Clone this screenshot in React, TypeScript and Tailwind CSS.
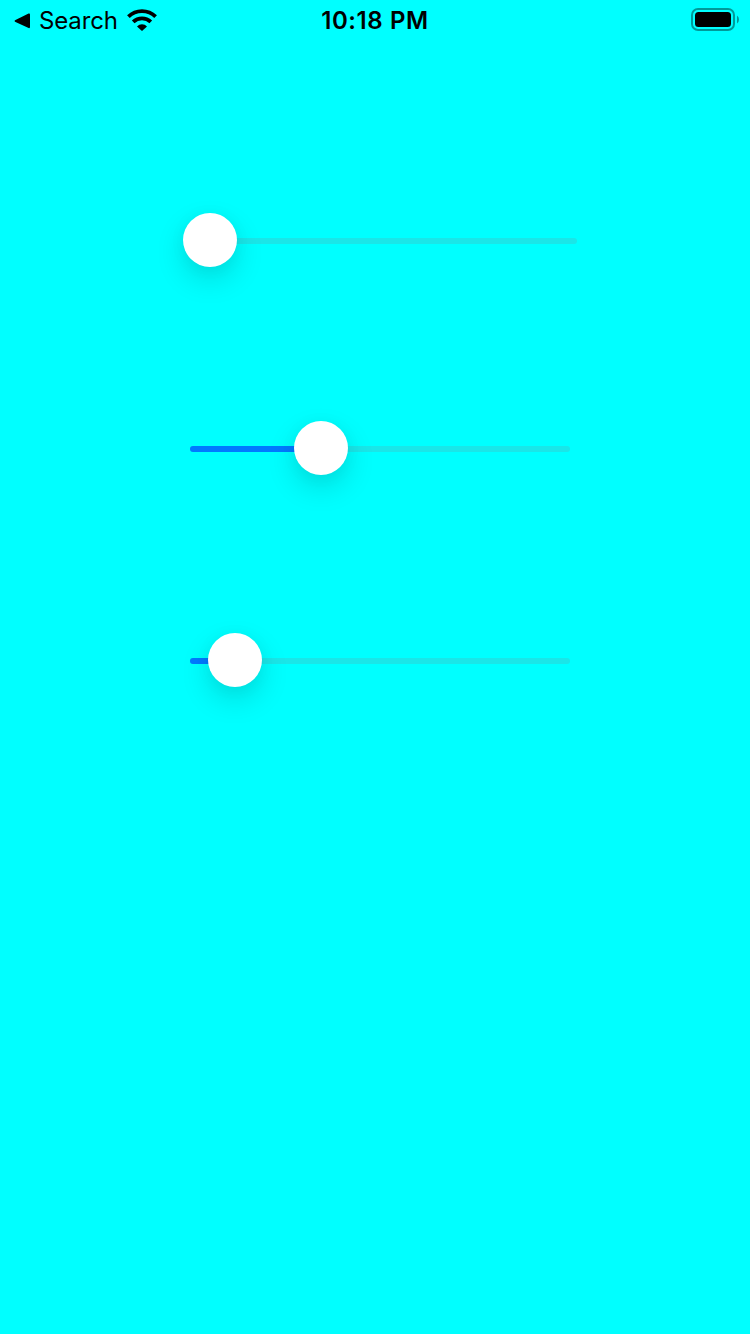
type SliderProps = { label: string; value: number; className: string };

const KNOB = 54;

function Slider({ label, value, className }: SliderProps) {
  return (
    <div
      role="slider"
      aria-label={label}
      aria-valuemin={0}
      aria-valuemax={394}
      aria-valuenow={value}
      className={`relative flex h-[54px] items-center ${className}`}
    >
      <div className="mt-[2px] h-[6px] w-full overflow-hidden rounded-full bg-[#1ae6e8]">
        <div className="h-full bg-[#007aff]" style={{ width: value > 0 ? value + KNOB / 2 : 0 }} />
      </div>
      <div
        className="absolute top-0 size-[54px] rounded-full bg-white shadow-[0_12px_30px_rgba(0,0,0,0.14),0_2px_18px_rgba(0,0,0,0.04)]"
        style={{ left: value }}
      />
    </div>
  );
}

function StatusBar() {
  return (
    <header className="grid h-10 grid-cols-3 items-center font-['Inter','Liberation_Sans',sans-serif] text-black">
      <div className="flex h-10 items-center pl-[14px]">
        <svg width="17" height="16" viewBox="0 0 17 16" className="mt-[2px] shrink-0" aria-hidden="true">
          <path d="M1 7.2 14.6.6Q16 .1 16 1.6V14Q16 15.6 14.6 15L1 8.8Q0 8 1 7.2Z" />
        </svg>
        <span className="mt-[2px] ml-2 w-[79px] whitespace-nowrap text-[24px] leading-10 tracking-[-0.15px]">Search</span>
        <svg width="30" height="22" viewBox="0 0 30 22" className="ml-[8.5px] shrink-0" aria-hidden="true">
          <g fill="none" stroke="#000" strokeWidth="3.8">
            <path d="M1.4 7.6A19.4 19.4 0 0 1 28.6 7.6" />
            <path d="M6.2 12.9A12.6 12.6 0 0 1 23.8 12.9" />
          </g>
          <path d="M10 17.4A7.1 7.1 0 0 1 20 17.4L15.6 21.6Q15 22.1 14.4 21.6Z" />
        </svg>
      </div>
      <div className="pt-[2px] text-center text-[24px] leading-[38px] font-semibold tracking-[0.6px] whitespace-nowrap">10:18 PM</div>
      <div className="flex justify-end pr-[10px]">
        <svg width="49" height="24" viewBox="0 0 49 24" aria-hidden="true">
          <rect x="1" y="1" width="42" height="21" rx="6" fill="none" stroke="#000" strokeOpacity=".4" strokeWidth="2" />
          <rect x="4" y="4" width="36" height="15" rx="3.5" />
          <path d="M46 7.5Q48 9 48 11.5T46 15.5Z" fillOpacity=".4" />
        </svg>
      </div>
    </header>
  );
}

export default function App() {
  return (
    <main className="flex min-h-[1334px] w-full flex-col bg-[#00ffff]">
      <StatusBar />
      <section className="flex flex-col pt-[173px]">
        <Slider label="First" value={0} className="ml-[183px] w-[394px]" />
        <Slider label="Second" value={104} className="mt-[154px] ml-[190px] w-[380px]" />
        <Slider label="Third" value={18} className="mt-[158px] ml-[190px] w-[380px]" />
      </section>
    </main>
  );
}
